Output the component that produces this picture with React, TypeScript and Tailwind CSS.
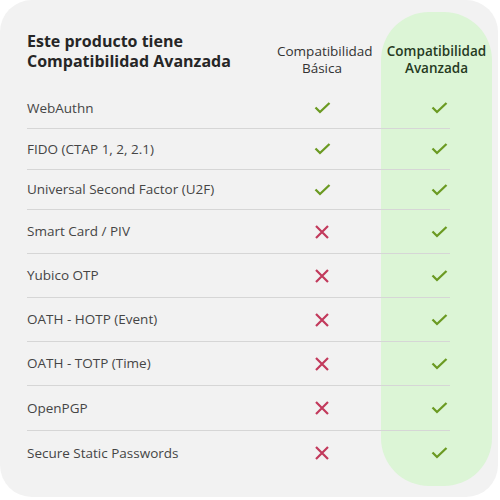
import React from "react";

const rows = [
  { name: "WebAuthn", basic: true, h: "h-[41px]" },
  { name: "FIDO (CTAP 1, 2, 2.1)", basic: true, h: "h-[41px]" },
  { name: "Universal Second Factor (U2F)", basic: true, h: "h-[40px]" },
  { name: "Smart Card / PIV", basic: false, h: "h-[44px]" },
  { name: "Yubico OTP", basic: false, h: "h-[44px]" },
  { name: "OATH - HOTP (Event)", basic: false, h: "h-[44px]" },
  { name: "OATH - TOTP (Time)", basic: false, h: "h-[44px]" },
  { name: "OpenPGP", basic: false, h: "h-[45px]" },
  { name: "Secure Static Passwords", basic: false, h: "h-[44px]" },
];

function Check() {
  return (
    <svg width="17" height="12" viewBox="0 0 17 12" fill="none">
      <path d="M1.5 5.5 L6 10 L15.5 1" stroke="#6b9a22" strokeWidth="2.3" />
    </svg>
  );
}

function Cross() {
  return (
    <svg width="14" height="14" viewBox="0 0 14 14" fill="none">
      <path d="M1 1 L13 13 M13 1 L1 13" stroke="#c23a5c" strokeWidth="2.2" />
    </svg>
  );
}

export default function App() {
  return (
    <div className="w-[500px] h-[500px] bg-white font-['Open_Sans',sans-serif]">
      <div className="w-[498px] h-[497px] rounded-[32px] bg-[#f2f2f2] pt-[12px] pl-[27px]">
        <div className="grid grid-cols-[250px_90px_14px_111px]">
          {/* header */}
          <div className="h-[76px] pt-[19px] text-[16px] leading-[20px] font-bold text-[#262626]">
            <div>Este producto tiene</div>
            <div>Compatibilidad Avanzada</div>
          </div>
          <div className="h-[76px] pt-[31px] text-center text-[13.5px] leading-[17px] text-[#333] whitespace-nowrap">
            <div>Compatibilidad</div>
            <div>Básica</div>
          </div>
          <div />
          <div className="h-[76px] pt-[31px] text-center text-[13.5px] leading-[17px] font-semibold text-[#263a1f] bg-[#dcf5d6] rounded-t-[48px] whitespace-nowrap">
            <div>Compatibilidad</div>
            <div>Avanzada</div>
          </div>

          {rows.map((r, i) => {
            const last = i === rows.length - 1;
            const line = last ? "" : "border-b border-[#d6d6d6]";
            return (
              <React.Fragment key={r.name}>
                <div className={`${r.h} ${line} flex items-center text-[13.5px] text-[#454545]`}>
                  {r.name}
                </div>
                <div className={`${r.h} ${line} flex items-center justify-center`}>
                  {r.basic ? <Check /> : <Cross />}
                </div>
                <div className={`${r.h} ${line}`} />
                <div className={`bg-[#dcf5d6] ${last ? "rounded-b-[48px] pb-[11px]" : ""}`}>
                  <div className={`${r.h} ${line} mr-[42px] flex items-center justify-end pr-[2px]`}>
                    <Check />
                  </div>
                </div>
              </React.Fragment>
            );
          })}
        </div>
      </div>
    </div>
  );
}
